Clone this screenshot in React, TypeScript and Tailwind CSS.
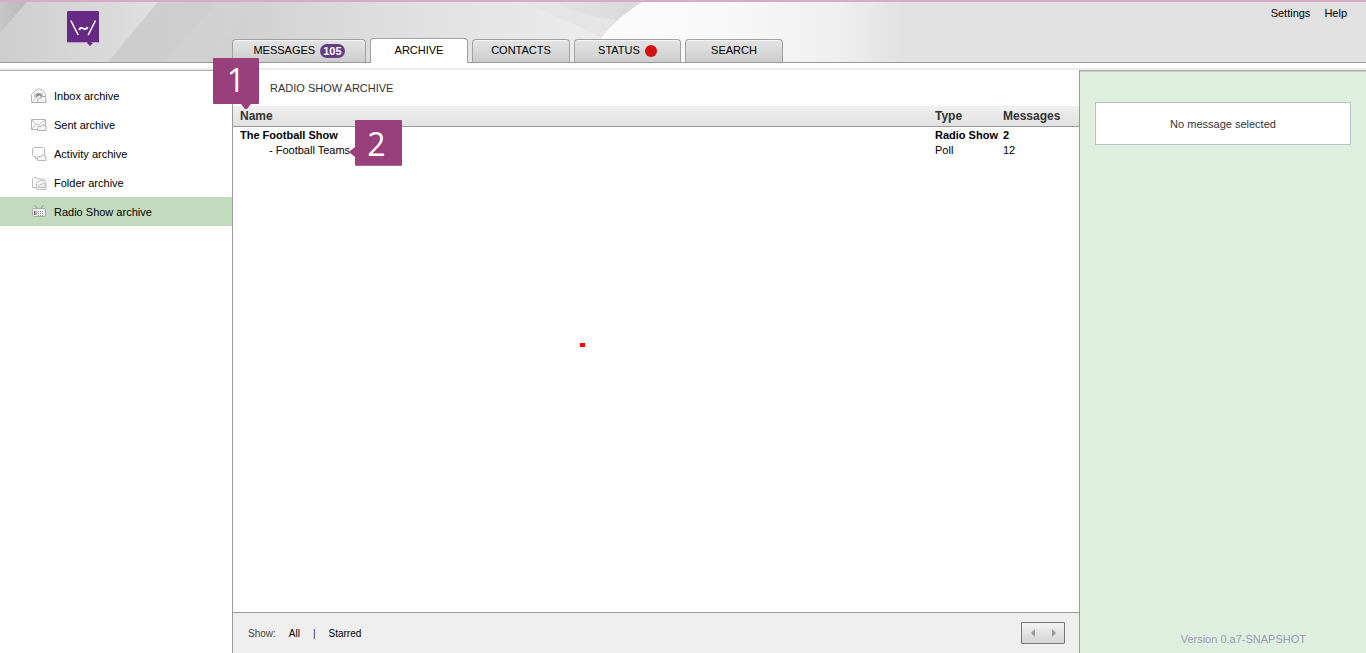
import React from "react";

function InboxIcon() {
  return (
    <svg width="16" height="16" viewBox="0 0 16 16" fill="none" stroke="#b0b0b0" aria-hidden="true">
      <path d="M.5 6.500 4 2.500 8 .8l4 1.700 2.500 4v3M.5 6.500v8H8" fill="#fff" />
      <path d="M3.500 9V5.500h8V9M1 14l5-5" stroke="#c4c4c4" />
      <path d="M4.500 8.500q0-3 3-3t4 3l-1.500.5-1-1.500H7.500L6 9z" fill="#8a8a8a" stroke="#999" strokeWidth=".5" />
      <path d="M6.500 14.500v-3l1-1.500H10l1-1.500h3l1 2v4z" fill="#f3f3f3" />
    </svg>
  );
}

function SentIcon() {
  return (
    <svg width="16" height="16" viewBox="0 0 16 16" fill="none" stroke="#b0b0b0" aria-hidden="true">
      <path d="M.5 2.500h14v10H.5z" fill="#fff" />
      <path d="m1 3 6 5.500L14 3M1 12l4.500-5" stroke="#bbb" />
      <path d="M6.500 13.500v-3l1-1H10l1-1.500h3l1 2v3.500z" fill="#f3f3f3" />
    </svg>
  );
}

function ActivityIcon() {
  return (
    <svg width="16" height="16" viewBox="0 0 16 16" fill="none" stroke="#b8b8b8" aria-hidden="true">
      <path d="M2.500 1.500h10l1 1v7l-1 1h-5l-3 2.500v-2.500h-2l-1-1v-7z" fill="#fff" />
      <path d="M6.500 14.500v-3l1-1H10l1-1.500h3l1 2v3.500z" fill="#f3f3f3" />
    </svg>
  );
}

function FolderIcon() {
  return (
    <svg width="16" height="16" viewBox="0 0 16 16" fill="none" stroke="#bcbcbc" aria-hidden="true">
      <path d="M1.500 12.500v-9l1-1h3l1 1.500h6l1 1v7.500z" fill="#fff" />
      <path d="M5.500 14.500v-7l1-1h2l1-1h5l.5 1v8z" fill="#fbfbfb" />
      <path d="M7.500 12.500v-2l1-1h2l1-1.500h2l.5 1v3.500z" fill="#eee" />
    </svg>
  );
}

function RadioIcon() {
  return (
    <svg width="16" height="16" viewBox="0 0 16 16" fill="none" stroke="#999" aria-hidden="true">
      <path d="m3.500 1 3 3.500M12.500 1l-3 3.500" />
      <rect x="1.500" y="4.500" width="13" height="8" rx="1" fill="#f0f0f0" stroke="#aaa" />
      <path d="M3.500 7v4M5 7v4" stroke="#666" />
      <path d="M7 7.500h6M7 9.500h6M7 11.500h6" stroke="#999" strokeDasharray="1 1" />
    </svg>
  );
}

const archives = [
  { label: "Inbox archive", Icon: InboxIcon },
  { label: "Sent archive", Icon: SentIcon },
  { label: "Activity archive", Icon: ActivityIcon },
  { label: "Folder archive", Icon: FolderIcon },
  { label: "Radio Show archive", Icon: RadioIcon, active: true },
];

function Tab({ className, active, children }: { className: string; active?: boolean; children: React.ReactNode }) {
  return (
    <a
      href="#"
      aria-current={active ? "page" : undefined}
      className={`flex items-center justify-center gap-[5px] rounded-t border border-[#a0a0a0] pb-px ${
        active
          ? "h-[25px] border-b-0 bg-white"
          : "h-6 border-b-[#999] bg-linear-to-b from-[#e4e4e4] to-[#cdcdcd] shadow-[inset_0_1px_0_#f4f4f4]"
      } ${className}`}
    >
      {children}
    </a>
  );
}

function HeaderArt() {
  return (
    <svg className="absolute top-0 left-0 h-[60px] w-[920px]" viewBox="0 0 920 60" preserveAspectRatio="none" aria-hidden="true">
      <defs>
        <linearGradient id="base" x1="0" x2="1">
          <stop offset="0" stopColor="#cbcbcb" />
          <stop offset=".22" stopColor="#cecece" />
          <stop offset=".45" stopColor="#e0e0e0" />
          <stop offset=".65" stopColor="#ececec" />
          <stop offset="1" stopColor="#e1e1e1" />
        </linearGradient>
        <linearGradient id="glow" x1="0" x2="1">
          <stop offset="0" stopColor="#fcfcfc" />
          <stop offset=".4" stopColor="#f8f8f8" />
          <stop offset=".75" stopColor="#efefef" />
          <stop offset=".95" stopColor="#e1e1e1" />
          <stop offset="1" stopColor="#e1e1e1" />
        </linearGradient>
        <linearGradient id="beam" x1="0" x2="1">
          <stop offset="0" stopColor="#cecece" />
          <stop offset="1" stopColor="#dfdfdf" />
        </linearGradient>
        <linearGradient id="corner" x1="0" x2="1">
          <stop offset="0" stopColor="#c6c6c6" />
          <stop offset="1" stopColor="#b8b8b8" />
        </linearGradient>
        <linearGradient id="shade" x1="0" x2="1">
          <stop offset="0" stopColor="#e6e6e6" />
          <stop offset="1" stopColor="#d8d8d8" />
        </linearGradient>
      </defs>
      <path d="M0 0h920v60H0z" fill="url(#base)" />
      <path d="M218 0h40l-50 60h-45z" fill="#d4d4d4" opacity=".5" />
      <path d="M0 0h27L0 31z" fill="url(#corner)" />
      <path d="M27 0h131l-50 60H0V31z" fill="url(#beam)" />
      <path d="M525 0h117q-24 15-40 35z" fill="url(#shade)" />
      <path d="M525 0h30q25 13 62 18l-15 17z" fill="#e5e5e5" />
      <path d="M594 60V46l8-11Q618 15 642 0h278v60z" fill="url(#glow)" />
    </svg>
  );
}

export default function App() {
  return (
    <div className="flex min-h-screen flex-col bg-white font-['Liberation_Sans',Arial,sans-serif] text-[11px] leading-[15px] text-black">
      <header className="relative flex h-[63px] shrink-0 justify-between border-t-2 border-b border-t-[#d9aac6] border-b-[#999] bg-[#e1e1e1]">
        <HeaderArt />
        <div className="relative flex">
          <div className="w-[232px] shrink-0 pt-[9px] pl-[67px]">
            <svg width="32" height="36" viewBox="0 0 32 36" role="img" aria-label="Logo">
              <path d="M1 0h30l1 1v30l-1 1h-5l-3 3-3-3H1l-1-1V1z" fill="#662a85" />
              <path d="M0 31h20l1 1H0zM25 31h7v1h-8z" fill="#c39bd0" />
              <path d="m3.800 9.500 7.400 14.500M28.500 9.500 21.200 24" stroke="#fff" strokeWidth="1.500" fill="none" />
              <path d="M12 18.800q1.500-3 4.300-1.300t4.400-1.500" stroke="#fff" strokeWidth="1.900" fill="none" />
            </svg>
          </div>
          <nav aria-label="Main" className="-mb-px flex items-end gap-1">
            <Tab className="w-[134px]">
              MESSAGES
              <span className="rounded-full bg-[#643c82] px-[3px] leading-[14px] font-bold text-white">105</span>
            </Tab>
            <Tab className="w-[98px]" active>ARCHIVE</Tab>
            <Tab className="w-[98px]">CONTACTS</Tab>
            <Tab className="w-[107px]">
              STATUS
              <span className="size-3 rounded-full bg-[#d41010]" />
            </Tab>
            <Tab className="w-[98px]">SEARCH</Tab>
          </nav>
        </div>
        <div className="relative flex gap-3.5 pt-1 pr-[19px]">
          <a href="#">Settings</a>
          <a href="#">Help</a>
        </div>
      </header>
      <div className="mt-[5px] h-0.5 shrink-0 bg-[#ebebeb]" />

      <div className="flex grow">
        <aside className="w-[232px] shrink-0 border-t border-[#aaa] pt-2.5">
          <nav aria-label="Archives">
            {archives.map(({ label, Icon, active }) => (
              <a
                key={label}
                href="#"
                aria-current={active ? "page" : undefined}
                className={`flex h-[29px] items-center gap-[7px] pt-px pl-[31px] ${active ? "bg-[#c2dbbe]" : ""}`}
              >
                <Icon />
                {label}
              </a>
            ))}
          </nav>
        </aside>

        <main className="relative flex grow flex-col border-x border-[#999]">
          <h1 className="flex h-9 items-center pl-[37px] text-[#333]">RADIO SHOW ARCHIVE</h1>
          <table className="w-full table-fixed border-separate border-spacing-0 text-left">
            <thead>
              <tr className="bg-linear-to-b from-[#f0f0f0] to-[#e0e0e0] text-[12px] text-[#333]">
                <th className="h-[21px] border-b border-[#999] pl-[7px]">Name</th>
                <th className="w-[68px] border-b border-[#999]">Type</th>
                <th className="w-[76px] border-b border-[#999]">Messages</th>
              </tr>
            </thead>
            <tbody>
              <tr className="font-bold">
                <td className="pt-px pl-[7px]">The Football Show</td>
                <td className="pt-px whitespace-nowrap">Radio Show</td>
                <td className="pt-px">2</td>
              </tr>
              <tr>
                <td className="pl-9">- Football Teams</td>
                <td>Poll</td>
                <td>12</td>
              </tr>
            </tbody>
          </table>
          <span className="absolute top-[273px] left-[347px] h-1 w-[5px] bg-[#f00]" />

          <div className="absolute top-[-12px] left-[-20px] flex h-[46px] w-[46px] justify-center rounded-[1px] bg-[#993f7b] font-['Open_Sans',sans-serif] text-[32px] leading-[44px] text-white">
            1
            <svg className="absolute top-full left-[27px]" width="12" height="5" viewBox="0 0 12 5" aria-hidden="true">
              <path d="M1 0h10L7 5H5z" fill="#993f7b" />
            </svg>
          </div>
          <div className="absolute top-[50px] left-[122px] flex h-[46px] w-[47px] justify-center rounded-[1px] border-b border-[#ae669a] bg-[#993f7b] pr-1 font-['Open_Sans',sans-serif] text-[32px] leading-[48px] text-white">
            2
            <svg className="absolute top-[26px] right-full" width="5" height="12" viewBox="0 0 5 12" aria-hidden="true">
              <path d="M5 1v10L0 7V5z" fill="#993f7b" />
            </svg>
          </div>

          <footer className="mt-auto flex h-[41px] items-center justify-between border-t border-[#999] bg-[#efefef] pr-3.5 pl-[15px] text-[10px]">
            <div className="flex gap-[13px]">
              <span className="text-[#444]">Show:</span>
              <a href="#">All</a>
              <span className="text-[#333]">|</span>
              <a href="#">Starred</a>
            </div>
            <div className="flex h-[22px] w-11 rounded-[1px] border border-[#777] bg-linear-to-b from-[#f2f2f2] to-[#d4d4d4]">
              <button type="button" aria-label="Previous page" className="flex grow items-center justify-center">
                <svg width="4" height="8" viewBox="0 0 4 8" aria-hidden="true"><path d="M4 0v8L0 4z" fill="#999" /></svg>
              </button>
              <button type="button" aria-label="Next page" className="flex grow items-center justify-center">
                <svg width="4" height="8" viewBox="0 0 4 8" aria-hidden="true"><path d="M0 0v8l4-4z" fill="#999" /></svg>
              </button>
            </div>
          </footer>
        </main>

        <aside className="flex w-[286px] shrink-0 flex-col justify-between border-t border-[#aaa] bg-[#dfefdf] shadow-[inset_0_1px_0_#cbcbcb]">
          <div className="mx-[15px] mt-[31px] flex h-[43px] items-center justify-center border border-[#b5c5cd] bg-white pt-px text-[#333]">
            No message selected
          </div>
          <p className="mb-1.5 pr-[60px] text-right text-[#9a9ab4]">Version 0.a7-SNAPSHOT</p>
        </aside>
      </div>
    </div>
  );
}
